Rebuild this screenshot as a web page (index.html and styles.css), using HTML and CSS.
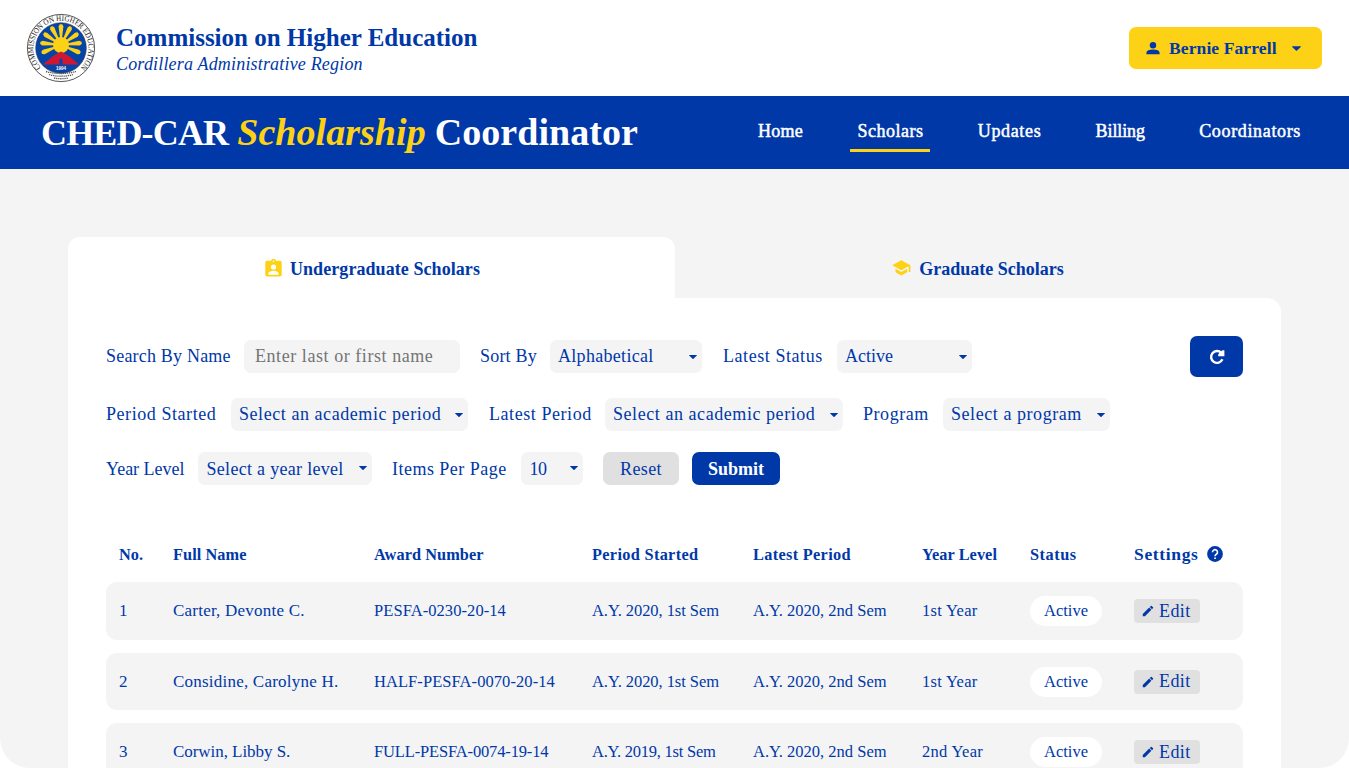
FILE: index.html
```html
<!DOCTYPE html>
<html lang="en">
<head>
<meta charset="utf-8">
<title>CHED-CAR Scholarship Coordinator</title>
<link rel="stylesheet" href="styles.css">
</head>
<body>
<svg class="sprite" aria-hidden="true">
  <symbol id="caret" viewBox="0 0 8 4"><path d="M.4 0h7.200q.6.1.2.6L4.500 3.800q-.5.4-1 0L.2.600Q-.2.1.400 0z"/></symbol>
  <symbol id="pencil" viewBox="0 0 24 24"><path d="M3 17.250V21h3.750L17.810 9.940l-3.750-3.750L3 17.250zM20.710 7.040a1 1 0 0 0 0-1.410l-2.340-2.340a1 1 0 0 0-1.410 0l-1.830 1.830 3.750 3.750 1.830-1.830z"/></symbol>
</svg>

<header class="top">
  <svg class="seal" viewBox="0 0 70 70">
    <defs>
      <path id="ring" d="M15 54.300A27.600 27.600 0 1 1 55 54.300"/>
    </defs>
    <circle cx="35" cy="35" r="33.600" fill="#fff" stroke="#444" stroke-width=".9"/>
    <circle cx="35" cy="35" r="25.300" fill="#0645a8" stroke="#334" stroke-width=".6"/>
    <text class="seal-name"><textPath href="#ring" textLength="129" lengthAdjust="spacingAndGlyphs">COMMISSION ON HIGHER EDUCATION</textPath></text>
    <g fill="#fdd116">
      <circle cx="35" cy="32" r="8"/>
      <path id="ray" d="M34 25 32.600 13.500l1.200-2.300h2.400l1.200 2.300L36 25z"/>
      <use href="#ray" transform="rotate(28 35 32)"/>
      <use href="#ray" transform="rotate(56 35 32)"/>
      <use href="#ray" transform="rotate(84 35 32)"/>
      <use href="#ray" transform="rotate(-28 35 32)"/>
      <use href="#ray" transform="rotate(-56 35 32)"/>
      <use href="#ray" transform="rotate(-84 35 32)"/>
      <use href="#ray" transform="rotate(112 35 32)"/>
      <use href="#ray" transform="rotate(-112 35 32)"/>
    </g>
    <path d="M35 38.500 43 43l10 8.500H17L27 43z" fill="#ce1833"/>
    <path d="M33.400 51.500v-4.500a1.600 1.600 0 0 1 3.200 0v4.500z" fill="#0645a8"/>
    <text class="seal-year" x="35" y="56.500">1994</text>
    <path d="M20 58.500q15 4 30 0M23 61.500q12 3.500 24 0M28 65q7 1.500 14 0" fill="none" stroke="#555" stroke-width="1.300" stroke-dasharray="1.300 .8"/>
  </svg>
  <div class="org">
    <div class="org-name">Commission on Higher Education</div>
    <div class="org-region">Cordillera Administrative Region</div>
  </div>
  <button class="user">
    <svg width="14" height="13" viewBox="0 0 14 13"><circle cx="7" cy="3.200" r="3.200"/><path d="M.4 12.300v-1.600Q.8 7.700 7 7.600q6.200.1 6.600 3.100v1.600z"/></svg>
    <span>Bernie Farrell</span>
    <svg class="caret" width="9" height="5"><use href="#caret"/></svg>
  </button>
</header>

<div class="banner">
  <h1><span class="t-caps">CHED-CAR</span> <em>Scholarship</em> <span class="t-role">Coordinator</span></h1>
  <nav>
    <a class="n-home">Home</a>
    <a class="n-scholars active">Scholars</a>
    <a class="n-updates">Updates</a>
    <a class="n-billing">Billing</a>
    <a class="n-coordinators">Coordinators</a>
  </nav>
</div>

<main>
  <div class="tabs">
    <div class="tab on">
      <svg width="17" height="18" viewBox="0 0 17 18"><path fill-rule="evenodd" d="M2 1.700h4A2.600 2.600 0 0 1 11 1.700h4a1.700 1.700 0 0 1 1.700 1.700v12.300a1.700 1.700 0 0 1-1.700 1.700H2A1.700 1.700 0 0 1 .3 15.700V3.400A1.700 1.700 0 0 1 2 1.700zM8.500 1.500a.8.8 0 1 0 0 1.600.8.8 0 0 0 0-1.600zM8.500 5.400a2.600 2.600 0 1 0 0 5.200 2.600 2.600 0 0 0 0-5.200zM3.400 15.700h10.200v-1.200c0-1.800-3.400-2.700-5.100-2.700s-5.100.9-5.100 2.700z"/></svg>
      <span>Undergraduate Scholars</span>
    </div>
    <div class="tab">
      <svg width="19" height="16" viewBox="0 0 19 16"><path d="M3.500 8.800v3.400L9.300 15.500l5.900-3.300V8.800l-5.900 3.300zM9.300.3.200 5.300l9.100 5 7.400-4.100v5.800h1.700V5.300z"/></svg>
      <span>Graduate Scholars</span>
    </div>
  </div>

  <section class="card">
    <div class="filters">
      <div class="row r1">
        <label class="s-name">Search By Name</label>
        <div class="field hint">Enter last or first name</div>
        <label class="s-sort">Sort By</label>
        <div class="field f-alpha">Alphabetical<svg class="caret"><use href="#caret"/></svg></div>
        <label>Latest Status</label>
        <div class="field f-active">Active<svg class="caret"><use href="#caret"/></svg></div>
        <button class="refresh"><svg width="16" height="16" viewBox="0 0 16 16"><path d="M13.400 10.300A5.900 5.900 0 1 1 12.300 3.900" fill="none" stroke="#fff" stroke-width="2.400"/><path d="M15.400 1.300v6H9.200V5.200L13.400 1.300z" fill="#fff"/></svg></button>
      </div>
      <div class="row r2">
        <label>Period Started</label>
        <div class="field">Select an academic period<svg class="caret"><use href="#caret"/></svg></div>
        <label>Latest Period</label>
        <div class="field">Select an academic period<svg class="caret"><use href="#caret"/></svg></div>
        <label>Program</label>
        <div class="field">Select a program<svg class="caret"><use href="#caret"/></svg></div>
      </div>
      <div class="row r3">
        <label class="s-year">Year Level</label>
        <div class="field f-year">Select a year level<svg class="caret"><use href="#caret"/></svg></div>
        <label class="s-items">Items Per Page</label>
        <div class="field f-count">10<svg class="caret"><use href="#caret"/></svg></div>
        <button class="btn reset">Reset</button>
        <button class="btn submit">Submit</button>
      </div>
    </div>

    <div class="table">
      <div class="line head">
        <span>No.</span><span>Full Name</span><span>Award Number</span><span class="h-wide">Period Started</span><span class="h-wide">Latest Period</span><span>Year Level</span><span class="h-status">Status</span>
        <span class="h-settings">Settings<svg width="16" height="16" viewBox="0 0 16 16"><circle cx="8" cy="8" r="7.900" fill="#0038a8"/><path d="M5.500 6.200a2.500 2.500 0 1 1 4 2Q8 9.300 8 10.300" fill="none" stroke="#fff" stroke-width="1.600"/><path d="M7.200 11.400h1.700v1.700H7.200z" fill="#fff"/></svg></span>
      </div>
      <div class="line item">
        <span>1</span><span class="name">Carter, Devonte C.</span><span class="award">PESFA-0230-20-14</span><span class="early">A.Y. 2020, 1st Sem</span><span>A.Y. 2020, 2nd Sem</span><span class="year">1st Year</span><span class="pill">Active</span><button class="edit"><svg width="14" height="14"><use href="#pencil"/></svg>Edit</button>
      </div>
      <div class="line item">
        <span>2</span><span class="name">Considine, Carolyne H.</span><span class="award">HALF-PESFA-0070-20-14</span><span class="early">A.Y. 2020, 1st Sem</span><span>A.Y. 2020, 2nd Sem</span><span class="year">1st Year</span><span class="pill">Active</span><button class="edit"><svg width="14" height="14"><use href="#pencil"/></svg>Edit</button>
      </div>
      <div class="line item">
        <span>3</span><span class="name short">Corwin, Libby S.</span><span class="tight">FULL-PESFA-0074-19-14</span><span class="earliest">A.Y. 2019, 1st Sem</span><span>A.Y. 2020, 2nd Sem</span><span class="year">2nd Year</span><span class="pill">Active</span><button class="edit"><svg width="14" height="14"><use href="#pencil"/></svg>Edit</button>
      </div>
    </div>
  </section>
</main>
</body>
</html>
```
FILE: styles.css
```css
* { box-sizing: border-box; }
html { height: 100%; overflow: hidden; }
body {
  margin: 0;
  height: 100%;
  overflow: hidden;
  display: flex;
  flex-direction: column;
  background: #fff;
  color: #0038a8;
  font-family: "Liberation Serif", "Times New Roman", serif;
  font-size: 18px;
  white-space: nowrap;
}
button { font: inherit; color: inherit; border: 0; padding: 0; margin: 0; letter-spacing: inherit; }
svg { display: block; fill: #0038a8; flex: none; }
.sprite { display: none; }

.top { flex: none; height: 96px; display: flex; align-items: center; padding: 0 27px 0 26px; }
.seal { width: 70px; height: 70px; }
.seal-name { font-size: 8px; fill: #222; }
.seal-year { font: bold 4.5px "Liberation Sans", sans-serif; fill: #fff; text-anchor: middle; }
.org { margin-left: 20px; padding-top: 4px; }
.org-name { font-size: 25px; font-weight: bold; line-height: 28px; letter-spacing: 0; }
.org-region { font-size: 18px; font-style: italic; line-height: 25px; letter-spacing: .18px; }
.user {
  margin-left: auto; width: 193px; height: 42px; border-radius: 7px;
  background: #fdd116; display: flex; align-items: center; padding-left: 17px;
  font-size: 17.5px; font-weight: bold; letter-spacing: .11px;
}
.user span { width: 108px; margin-left: 9px; padding-top: 1px; text-align: left; }
.user .caret { margin-left: 15px; }

.banner {
  flex: none; height: 73px; background: #0038a8; color: #fff;
  display: flex; justify-content: space-between; align-items: center; padding: 0 41px;
}
h1 { margin: 0; font-size: 36px; line-height: 72px; }
h1 em { color: #fdd116; font-size: 38px; letter-spacing: .05px; }
.t-caps { letter-spacing: -.85px; }
.t-role { font-size: 38px; letter-spacing: .05px; }
nav { display: flex; gap: 40.3px; font-size: 18px; -webkit-text-stroke: .5px #fff; margin-bottom: 3px; }
nav a { padding: 0 7px; height: 42px; line-height: 43px; border-bottom: 3px solid transparent; }
nav .active { border-color: #fdd116; }
.n-home { letter-spacing: .3px; }
.n-scholars { letter-spacing: .5px; }
.n-updates { letter-spacing: .65px; }
.n-billing { letter-spacing: -.1px; }
.n-coordinators { letter-spacing: .65px; }

main { flex: 1; min-height: 0; overflow: hidden; background: #f4f4f4; border-radius: 0 0 30px 30px; padding: 68px 68px 0; }
.tabs { display: grid; grid-template-columns: 607px 606px; height: 61px; }
.tab {
  display: flex; align-items: center; justify-content: center; gap: 8px;
  padding: 4px 0 0; border-radius: 12px 12px 0 0;
  font-size: 18px; font-weight: bold; letter-spacing: 0;
}
.tab svg { fill: #fdd116; margin-bottom: 3px; }
.tab.on { background: #fff; letter-spacing: .07px; padding-left: 2px; }
.card { background: #fff; height: 500px; border-radius: 0 14px 0 0; padding: 38px 38px 0; }

.filters { letter-spacing: .56px; }
.row { display: grid; align-items: center; }
.r1 { grid-template-columns: 138px 216px 20px 70px 152px 21px 114px 135px 1fr 53px; height: 41px; }
.r1 > :nth-child(3) { grid-column: 4; }
.r1 > :nth-child(5) { grid-column: 7; }
.r1 > .refresh { grid-column: 10; }
.r2 { grid-template-columns: 125px 237px 21px 116px 238px 20px 80px 167px; margin-top: 21px; }
.r2 > :nth-child(3) { grid-column: 4; }
.r2 > :nth-child(5) { grid-column: 7; }
.r3 { grid-template-columns: 92px 174px 20px 129px 62px 20px 76px 13px 88px; margin-top: 21px; }
.r3 > :nth-child(3) { grid-column: 4; }
.r3 > .reset { grid-column: 7; }
.r3 > .submit { grid-column: 9; }
.s-name, .s-sort { letter-spacing: .2px; }
.s-year { letter-spacing: -.02px; }
.s-items { letter-spacing: .48px; }
.field {
  height: 33px; border-radius: 7px; background: #f4f4f4;
  display: flex; align-items: center; justify-content: space-between; padding: 0 5px 0 8px;
}
.field .caret { width: 8px; height: 4px; }
.hint { color: #757575; padding-left: 11px; }
.f-alpha, .f-year { letter-spacing: .3px; }
.f-active { letter-spacing: 0; }
.f-count { letter-spacing: -.4px; }
.r3 label { padding-top: 2px; }
.r3 .field { padding-top: 2px; padding-left: 8.5px; }
.r3 .caret { margin-bottom: 4px; }
.refresh { height: 41px; border-radius: 7px; background: #0038a8; display: grid; place-items: center; }
.btn { height: 33px; border-radius: 7px; padding-top: 1px; }
.reset { background: #e0e0e0; letter-spacing: .4px; }
.submit { background: #0038a8; color: #fff; font-weight: bold; letter-spacing: 0; }

.table { margin-top: 50px; display: grid; gap: 13px; font-size: 16.5px; }
.line {
  display: grid; align-items: center; padding-left: 13px;
  grid-template-columns: 54px 201px 218px 161px 169px 108px 104px 1fr;
}
.head { height: 34.3px; padding-top: 5px; font-size: 16.3px; font-weight: bold; letter-spacing: .07px; }
.h-wide { letter-spacing: .33px; }
.h-status { letter-spacing: .55px; }
.h-settings { display: flex; align-items: center; gap: 8px; font-size: 17.5px; letter-spacing: .65px; }
.h-settings svg { margin-bottom: 2px; }
.item { height: 57.5px; border-radius: 11px; background: #f4f4f4; }
.name { font-size: 17px; letter-spacing: .22px; }
.short { letter-spacing: -.05px; }
.award { letter-spacing: .07px; }
.item > span:nth-child(1) { font-size: 17px; }
.tight { letter-spacing: -.15px; }
.early { letter-spacing: -.06px; }
.earliest { letter-spacing: -.25px; }
.year { letter-spacing: .3px; }
.pill { width: 72px; height: 30px; line-height: 29px; border-radius: 15px; background: #fff; text-align: center; }
.edit {
  width: 66px; height: 24px; border-radius: 4px; background: #e0e0e0;
  display: flex; align-items: center; padding-left: 7px; gap: 4px; font-size: 18px; letter-spacing: .4px;
}
```
